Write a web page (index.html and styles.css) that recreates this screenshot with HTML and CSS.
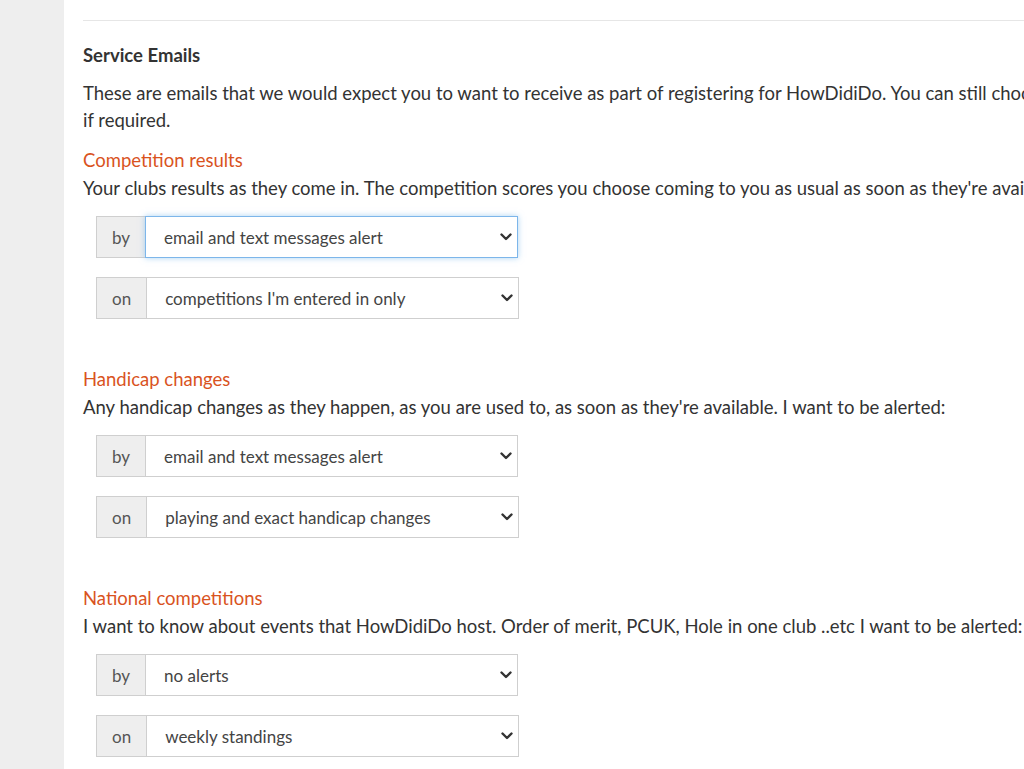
FILE: index.html
```html
<!DOCTYPE html>
<html lang="en">
<head>
<meta charset="utf-8">
<title>Service Emails</title>
<link rel="stylesheet" href="styles.css">
</head>
<body>
<div class="page">
  <aside class="sidebar"></aside>
  <main class="content">
    <div class="rule"></div>
    <h3 class="title">Service Emails</h3>
    <p class="intro">These are emails that we would expect you to want to receive as part of registering for HowDidiDo. You can still choose how and when you get them<br>if required.</p>

    <section class="pref">
      <h4 class="pref-title">Competition results</h4>
      <p class="pref-desc">Your clubs results as they come in. The competition scores you choose coming to you as usual as soon as they're available. I want to be alerted:</p>
      <div class="group">
        <span class="addon">by</span>
        <div class="select-wrap focused">
          <select class="select"><option>email and text messages alert</option></select>
          <svg class="chev" viewBox="0 0 12 8" width="12" height="8"><path d="M1.5 1.5 L6 6 L10.5 1.5" fill="none" stroke="#333" stroke-width="2.4" stroke-linecap="round" stroke-linejoin="round"/></svg>
        </div>
      </div>
      <div class="group">
        <span class="addon">on</span>
        <div class="select-wrap">
          <select class="select"><option>competitions I'm entered in only</option></select>
          <svg class="chev" viewBox="0 0 12 8" width="12" height="8"><path d="M1.5 1.5 L6 6 L10.5 1.5" fill="none" stroke="#333" stroke-width="2.4" stroke-linecap="round" stroke-linejoin="round"/></svg>
        </div>
      </div>
    </section>

    <section class="pref">
      <h4 class="pref-title">Handicap changes</h4>
      <p class="pref-desc">Any handicap changes as they happen, as you are used to, as soon as they're available. I want to be alerted:</p>
      <div class="group">
        <span class="addon">by</span>
        <div class="select-wrap">
          <select class="select"><option>email and text messages alert</option></select>
          <svg class="chev" viewBox="0 0 12 8" width="12" height="8"><path d="M1.5 1.5 L6 6 L10.5 1.5" fill="none" stroke="#333" stroke-width="2.4" stroke-linecap="round" stroke-linejoin="round"/></svg>
        </div>
      </div>
      <div class="group">
        <span class="addon">on</span>
        <div class="select-wrap">
          <select class="select"><option>playing and exact handicap changes</option></select>
          <svg class="chev" viewBox="0 0 12 8" width="12" height="8"><path d="M1.5 1.5 L6 6 L10.5 1.5" fill="none" stroke="#333" stroke-width="2.4" stroke-linecap="round" stroke-linejoin="round"/></svg>
        </div>
      </div>
    </section>

    <section class="pref">
      <h4 class="pref-title">National competitions</h4>
      <p class="pref-desc">I want to know about events that HowDidiDo host. Order of merit, PCUK, Hole in one club ..etc I want to be alerted:</p>
      <div class="group">
        <span class="addon">by</span>
        <div class="select-wrap">
          <select class="select"><option>no alerts</option></select>
          <svg class="chev" viewBox="0 0 12 8" width="12" height="8"><path d="M1.5 1.5 L6 6 L10.5 1.5" fill="none" stroke="#333" stroke-width="2.4" stroke-linecap="round" stroke-linejoin="round"/></svg>
        </div>
      </div>
      <div class="group">
        <span class="addon">on</span>
        <div class="select-wrap">
          <select class="select"><option>weekly standings</option></select>
          <svg class="chev" viewBox="0 0 12 8" width="12" height="8"><path d="M1.5 1.5 L6 6 L10.5 1.5" fill="none" stroke="#333" stroke-width="2.4" stroke-linecap="round" stroke-linejoin="round"/></svg>
        </div>
      </div>
    </section>
  </main>
</div>
</body>
</html>
```
FILE: styles.css
```css
html, body {
  margin: 0;
  padding: 0;
  overflow: hidden;
  background: #fff;
}
body {
  font-family: "Lato", "Liberation Sans", sans-serif;
  color: #333;
}
.page {
  display: flex;
  min-height: 769px;
  width: 1024px;
  overflow: hidden;
}
.sidebar {
  flex: 0 0 64px;
  background: #eeeeee;
}
.content {
  flex: 1 0 auto;
  padding: 20px 0 0 19px;
  min-width: 0;
}
.rule {
  height: 1px;
  background: #e6e6e6;
  margin-right: -40px;
}
.title {
  margin: 21px 0 0;
  font-size: 18.5px;
  font-weight: 700;
  line-height: 27px;
  color: #333;
}
.intro {
  margin: 11px 0 0;
  font-size: 18.5px;
  line-height: 27px;
  white-space: nowrap;
}
.pref {
  margin-top: 13px;
}
.pref + .pref {
  margin-top: 47px;
}
.pref-title {
  margin: 0;
  font-size: 18.5px;
  font-weight: 400;
  line-height: 27px;
  color: #d9531e;
}
.pref-desc {
  margin: 1px 0 14px;
  font-size: 18.5px;
  line-height: 27px;
  white-space: nowrap;
}
.group {
  display: flex;
  margin-left: 13px;
  height: 42px;
  margin-bottom: 19px;
}
.group:last-child {
  margin-bottom: 0;
}
.addon {
  display: flex;
  align-items: center;
  justify-content: center;
  padding: 0 15px;
  background: #eeeeee;
  border: 1px solid #cfcfcf;
  border-right: none;
  font-size: 17px;
  color: #555;
}
.select-wrap {
  position: relative;
  width: 373px;
}
.select {
  appearance: none;
  -webkit-appearance: none;
  width: 100%;
  height: 100%;
  margin: 0;
  box-sizing: border-box;
  border: 1px solid #cfcfcf;
  border-radius: 0;
  background: #fff;
  padding: 0 30px 0 18px;
  font-family: "Lato", "Liberation Sans", sans-serif;
  font-size: 17px;
  color: #444;
  outline: none;
}
.focused .select {
  border-color: #7db6ea;
  box-shadow: 0 0 6px rgba(102, 175, 233, 0.55);
}
.chev {
  position: absolute;
  right: 6px;
  top: 17px;
  pointer-events: none;
}
```
